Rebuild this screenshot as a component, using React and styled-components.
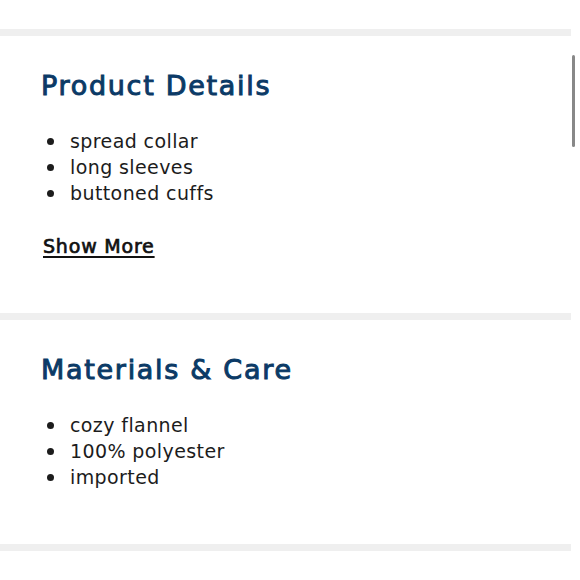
import styled, { createGlobalStyle } from "styled-components";

const GlobalStyle = createGlobalStyle`
	html, body {
		margin: 0;
		padding: 0;
		background: #ffffff;
	}
	body {
		font-family: "DejaVu Sans", "Lato", sans-serif;
		-webkit-font-smoothing: antialiased;
	}
`;

const sections = [
	{
		title: "Product Details",
		items: ["spread collar", "long sleeves", "buttoned cuffs"],
		showMore: true,
	},
	{
		title: "Materials & Care",
		items: ["cozy flannel", "100% polyester", "imported"],
		showMore: false,
	},
];

export default function App() {
	return (
		<>
			<GlobalStyle />
			<Page>
				<Content>
					<TopSpace />
					{sections.map((section) => (
						<div key={section.title}>
							<Divider />
							<Section>
								<Heading>{section.title}</Heading>
								<List>
									{section.items.map((item) => (
										<Item key={item}>{item}</Item>
									))}
								</List>
								{section.showMore && <ShowMore href="#">Show More</ShowMore>}
							</Section>
						</div>
					))}
					<Divider />
				</Content>
				<Scrollbar />
			</Page>
		</>
	);
}

const Page = styled.div`
	position: relative;
	width: 580px;
	height: 580px;
	overflow: hidden;
	background: #ffffff;
`;

const Content = styled.div`
	width: 571px;
`;

const TopSpace = styled.div`
	height: 29px;
`;

const Divider = styled.div`
	height: 7px;
	background: #efefef;
`;

const Section = styled.section`
	display: flex;
	flex-direction: column;
	align-items: flex-start;
	padding: 33px 0 54px 41px;
`;

const Heading = styled.h2`
	margin: 0;
	font-size: 27px;
	line-height: 34px;
	font-weight: 400;
	letter-spacing: 1.7px;
	-webkit-text-stroke: 1px #0b3a66;
	color: #0b3a66;
`;

const List = styled.ul`
	list-style: none;
	margin: 25px 0 0;
	padding: 0;
	display: flex;
	flex-direction: column;
`;

const Item = styled.li`
	position: relative;
	padding-left: 29px;
	font-size: 19px;
	line-height: 26px;
	color: #1c1c1c;
	letter-spacing: 0.4px;

	&::before {
		content: "";
		position: absolute;
		left: 6px;
		top: 10px;
		width: 7px;
		height: 7px;
		border-radius: 50%;
		background: #1c1c1c;
	}
`;

const ShowMore = styled.a`
	margin-top: 27px;
	margin-left: 2px;
	font-size: 19px;
	line-height: 26px;
	font-weight: 400;
	color: #111111;
	-webkit-text-stroke: 0.7px #111111;
	text-decoration: underline;
	text-underline-offset: 3px;
	text-decoration-thickness: 2px;
	letter-spacing: 0.8px;
`;

const Scrollbar = styled.div`
	position: absolute;
	top: 55px;
	right: 5px;
	width: 3px;
	height: 92px;
	border-radius: 2px;
	background: #888888;
`;
